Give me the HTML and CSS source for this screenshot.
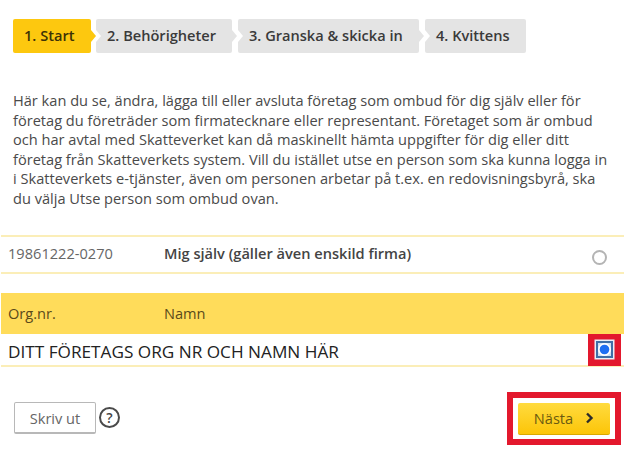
FILE: index.html
```html
<!DOCTYPE html>
<html lang="sv">

<head>
    <meta charset="UTF-8">
    <title>Ombud</title>
    <link rel="stylesheet" href="styles.css">
</head>

<body>
    <div class="steps">
        <div class="step active">1. Start</div>
        <div class="step step-2">2. Behörigheter</div>
        <div class="step step-3">3. Granska &amp; skicka in</div>
        <div class="step step-4">4. Kvittens</div>
    </div>

    <p class="intro">Här kan du se, ändra, lägga till eller avsluta företag som ombud för dig själv eller för företag du företräder som firmatecknare eller representant. Företaget som är ombud och har avtal med Skatteverket kan då maskinellt hämta uppgifter för dig eller ditt företag från Skatteverkets system. Vill du istället utse en person som ska kunna logga in i Skatteverkets e-tjänster, även om personen arbetar på t.ex. en redovisningsbyrå, ska du välja Utse person som ombud ovan.</p>

    <div class="row self-row">
        <span class="col-nr">19861222-0270</span>
        <span class="col-name">Mig själv (gäller även enskild firma)</span>
        <span class="radio"></span>
    </div>

    <div class="row table-head">
        <span class="col-nr">Org.nr.</span>
        <span class="col-name">Namn</span>
    </div>
    <div class="row company-row">
        <span class="company">DITT FÖRETAGS ORG NR OCH NAMN HÄR</span>
        <span class="mark">
            <svg width="21" height="21" viewBox="0 0 21 21">
                <rect x="0.5" y="0.5" width="20" height="20" fill="#e9eff7" />
                <rect x="2" y="2" width="17" height="17" fill="#3f6fa6" />
                <rect x="4" y="4" width="13" height="13" fill="#cfdff2" />
                <circle cx="10.5" cy="10.5" r="6.5" fill="#fff" />
                <circle cx="10.5" cy="10.5" r="4.8" fill="#1f6ff2" />
            </svg>
        </span>
    </div>

    <div class="actions">
        <button class="print" type="button">Skriv ut</button>
        <span class="help">?</span>
        <span class="next-mark">
            <button class="next" type="button">Nästa
                <svg class="chevron" width="9" height="12" viewBox="0 0 9 12">
                    <path d="M2 1.5 L6.5 6 L2 10.5" fill="none" stroke="#2b2b2b" stroke-width="2.4" />
                </svg>
            </button>
        </span>
    </div>
</body>

</html>
```

FILE: styles.css
```css
body {
    font-family: "Open Sans", Arial, sans-serif;
    margin: 0;
    width: 624px;
    height: 464px;
    overflow: hidden;
    background-color: #fff;
    color: #444;
}

.steps {
    display: flex;
    gap: 5px;
    padding: 19px 0 0 13px;
}

.step {
    position: relative;
    height: 34px;
    line-height: 33px;
    padding-left: 11px;
    font-size: 14.6px;
    font-weight: 600;
    color: #3a3a3a;
    background-color: #e4e4e4;
    border-radius: 2px;
    box-sizing: border-box;
}

.step::after {
    content: "";
    position: absolute;
    z-index: 1;
    top: 11px;
    right: -5px;
    border-left: 5px solid #e4e4e4;
    border-top: 6px solid transparent;
    border-bottom: 6px solid transparent;
}

.step::before {
    content: "";
    position: absolute;
    top: 11px;
    left: 0;
    border-left: 5px solid #fff;
    border-top: 6px solid transparent;
    border-bottom: 6px solid transparent;
}

.step.active {
    width: 78px;
    background-color: #fdc80f;
    color: #3d3206;
}

.step.active::before {
    display: none;
}

.step.active::after {
    border-left-color: #fdc80f;
}

.step-2 {
    width: 136px;
}

.step-3 {
    width: 181px;
    margin-left: 1px;
}

.step-4 {
    width: 101px;
    margin-left: 1px;
}

.step-4::after {
    display: none;
}

.intro {
    margin: 38px 0 0 13px;
    width: 598px;
    font-size: 14.6px;
    line-height: 19.5px;
    color: #4a4a4a;
}

.row {
    display: flex;
    align-items: center;
    margin-left: 1px;
    box-sizing: border-box;
    font-size: 14.6px;
}

.col-nr {
    width: 163px;
    padding-left: 7px;
    box-sizing: border-box;
}

.col-name {
    flex: 1;
}

.self-row {
    height: 39px;
    margin-top: 27px;
    border-top: 2px solid #fbeeb8;
    border-bottom: 2px solid #fbeeb8;
}

.self-row .col-nr {
    color: #666;
    padding-bottom: 3px;
}

.self-row .col-name {
    font-weight: 600;
    padding-bottom: 3px;
}

.radio {
    width: 11px;
    height: 11px;
    margin: 5px 17px 0 0;
    border: 2px solid #b4b4b4;
    border-radius: 50%;
}

.table-head {
    height: 41px;
    margin-top: 19px;
    padding-bottom: 2px;
    background-color: #ffdc5a;
    color: #5a4a1a;
}

.company-row {
    height: 33px;
    border-bottom: 2px solid #fbeeb8;
}

.company {
    flex: 1;
    padding: 3px 0 0 7px;
    font-size: 17.2px;
    color: #222;
}

.mark {
    display: flex;
    align-items: center;
    justify-content: center;
    width: 33px;
    height: 32px;
    margin-right: 3px;
    background-color: #e3182d;
}

.actions {
    display: flex;
    align-items: flex-start;
    margin-top: 25px;
    padding-left: 14px;
}

.print {
    width: 82px;
    height: 32px;
    margin-top: 10px;
    padding: 0;
    font-family: inherit;
    font-size: 14.6px;
    color: #666;
    background-color: #fff;
    border: 1px solid #b8b8b8;
    border-bottom-width: 2px;
    border-radius: 2px;
}

.help {
    width: 17px;
    height: 17px;
    margin: 15px 0 0 3px;
    border: 2px solid #4a4a4a;
    border-radius: 50%;
    font-size: 14px;
    font-weight: 600;
    line-height: 17px;
    text-align: center;
}

.next-mark {
    display: flex;
    align-items: center;
    justify-content: center;
    width: 102px;
    height: 41px;
    margin-left: 387px;
    border: 6px solid #e3182d;
    background-color: #fff;
}

.next {
    display: flex;
    align-items: center;
    justify-content: center;
    gap: 12px;
    width: 92px;
    height: 32px;
    padding: 0;
    font-family: inherit;
    font-size: 14.6px;
    color: #6b5a10;
    background: linear-gradient(#ffdb3f, #fcc508);
    border: none;
    border-bottom: 1px solid #d9a800;
    border-radius: 2px;
}
```
